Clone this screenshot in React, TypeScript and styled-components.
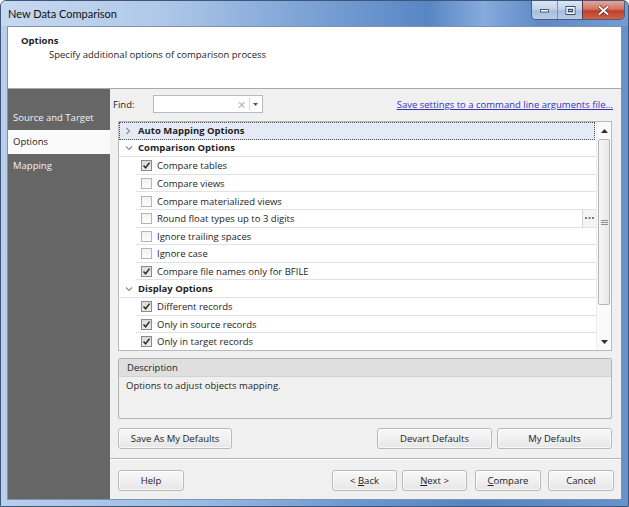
import React from 'react';
import styled, { createGlobalStyle } from 'styled-components';

const Global = createGlobalStyle`
  html, body { margin: 0; padding: 0; background: #ffffff; overflow: hidden; }
  body {
    font-family: "Open Sans", "Noto Sans", sans-serif;
    font-size: 9.5px;
    color: #1e1e1e;
  }
  * { box-sizing: border-box; }
`;

const Window = styled.div`
  width: 629px;
  height: 507px;
  display: flex;
  flex-direction: column;
  border: 1px solid #3d5679;
  border-radius: 6px 6px 0 0;
  padding: 0 6px 6px 6px;
  background: linear-gradient(to right, #b9cfea 0%, #9ebde3 30%, #6f99d1 55%, #5583c3 75%, #6892cc 100%);
`;

const TitleBar = styled.div`
  height: 25px;
  display: flex;
  justify-content: space-between;
  align-items: flex-start;
  margin: 0 -6px;
  padding: 0 3px 0 7px;
  border-radius: 5px 5px 0 0;
  background: linear-gradient(to right, #c7d9ef 0%, #b0c9e9 25%, #7ea4d6 48%, #5886c4 68%, #86abdc 77%, #5d8ac7 86%, #729cd2 100%);
`;

const TitleText = styled.div`
  font-family: Lato, "Open Sans", sans-serif;
  font-size: 11px;
  line-height: 25px;
  color: #111;
`;

const CaptionGroup = styled.div`
  display: flex;
  height: 19px;
  border: 1px solid #4b5f7d;
  border-top: none;
  border-radius: 0 0 5px 5px;
  overflow: hidden;
`;

const CaptionButton = styled.div<{ $w: number; $close?: boolean }>`
  width: ${p => p.$w}px;
  height: 100%;
  display: flex;
  align-items: center;
  justify-content: center;
  border-left: ${p => (p.$close ? '1px solid #5a3a3a' : '1px solid #7d92b3')};
  &:first-child { border-left: none; }
  background: ${p =>
    p.$close
      ? 'linear-gradient(to bottom, #e3a598 0%, #d27563 45%, #c13f2c 55%, #d2604a 100%)'
      : 'linear-gradient(to bottom, #dbe6f4 0%, #c2d3ea 45%, #a5bddf 55%, #b9cde9 100%)'};
`;

const Client = styled.div`
  flex: 1;
  display: flex;
  flex-direction: column;
  border: 1px solid #7e93b2;
  background: #f0f0f0;
  min-height: 0;
`;

const Header = styled.div`
  height: 62px;
  background: #ffffff;
  border-bottom: 1px solid #a9a9a9;
  padding: 7px 0 0 13px;
`;

const HeaderTitle = styled.div`
  font-weight: 700;
  line-height: 13px;
`;

const HeaderSub = styled.div`
  line-height: 13px;
  margin-top: 1px;
  padding-left: 28px;
`;

const Main = styled.div`
  flex: 1;
  display: flex;
  min-height: 0;
`;

const Sidebar = styled.div`
  width: 102px;
  background: #666666;
  padding-top: 17px;
  display: flex;
  flex-direction: column;
`;

const NavItem = styled.div<{ $active?: boolean }>`
  height: 24px;
  line-height: 24px;
  padding-left: 5px;
  color: ${p => (p.$active ? '#222' : '#f2f2f2')};
  background: ${p => (p.$active ? '#fafafa' : 'transparent')};
`;

const Content = styled.div`
  flex: 1;
  display: flex;
  flex-direction: column;
  padding: 6px 9px 0 8px;
  min-width: 0;
`;

const FindRow = styled.div`
  height: 18px;
  display: flex;
  align-items: center;
`;

const FindLabel = styled.span`
  margin-left: -5px;
  width: 40px;
`;

const FindBox = styled.div`
  width: 110px;
  height: 18px;
  border: 1px solid #b5b9c2;
  background: #fff;
  display: flex;
  align-items: center;
  justify-content: flex-end;
`;

const ClearGlyph = styled.span`
  color: #b8b8b8;
  font-size: 11px;
  width: 12px;
  text-align: center;
  margin-right: 2px;
`;

const DropPart = styled.span`
  width: 12px;
  height: 12px;
  border-left: 1px solid #d8d8d8;
  display: flex;
  align-items: center;
  justify-content: center;
  margin-right: 1px;
`;

const Link = styled.a`
  margin-left: auto;
  margin-right: -1px;
  color: #3434bb;
  text-decoration: underline;
  cursor: pointer;
`;

const Grid = styled.div`
  margin-top: 8px;
  height: 230px;
  border: 1px solid #b9b9b9;
  background: #fff;
  display: flex;
  overflow: hidden;
`;

const List = styled.div`
  flex: 1;
  display: flex;
  flex-direction: column;
  min-width: 0;
`;

const CategoryRow = styled.div<{ $focus?: boolean }>`
  height: 17.6px;
  flex: none;
  display: flex;
  align-items: center;
  padding-left: 6px;
  font-weight: 700;
  border-bottom: 1px solid #e2e2e2;
  ${p =>
    p.$focus
      ? `background: #e4ebf6; border: 1px dotted #4a4a4a; margin-right: 1px; padding-left: 5px;`
      : ''}
`;

const Chevron = styled.span`
  width: 13px;
  display: flex;
  align-items: center;
`;

const ItemRow = styled.div`
  height: 17.6px;
  flex: none;
  margin-left: 17px;
  display: flex;
  align-items: center;
  padding-left: 5px;
  border-bottom: 1px solid #e2e2e2;
  border-top: 1px solid transparent;
`;

const Box = styled.span<{ $checked?: boolean }>`
  width: 11px;
  height: 11px;
  flex: none;
  border: 1px solid ${p => (p.$checked ? '#8a8a8a' : '#b4b4b4')};
  background: ${p =>
    p.$checked ? 'linear-gradient(#dcdcdc, #ececec)' : 'linear-gradient(#f2f2f2, #fcfcfc)'};
  display: flex;
  align-items: center;
  justify-content: center;
  margin-right: 5px;
`;

const EllipsisButton = styled.span`
  margin-left: auto;
  width: 14px;
  height: 17px;
  border-left: 1px solid #d4d4d4;
  background: #f4f4f4;
  display: flex;
  align-items: center;
  justify-content: center;
`;

const ScrollBar = styled.div`
  width: 15px;
  flex: none;
  background: #fafafa;
  border-left: 1px solid #ededed;
  display: flex;
  flex-direction: column;
  align-items: center;
`;

const ArrowCell = styled.div`
  height: 17px;
  width: 100%;
  display: flex;
  align-items: center;
  justify-content: center;
`;

const Thumb = styled.div`
  width: 12px;
  height: 166px;
  border: 1px solid #b6b6b6;
  border-radius: 2px;
  background: linear-gradient(to right, #f6f6f6, #e9e9e9);
  display: flex;
  align-items: center;
  justify-content: center;
`;

const Spacer = styled.div`
  flex: 1;
`;

const Description = styled.div`
  margin-top: 7px;
  height: 61px;
  border: 1px solid #b3b3b3;
  border-radius: 2px;
  display: flex;
  flex-direction: column;
  overflow: hidden;
`;

const DescHeader = styled.div`
  height: 18px;
  line-height: 18px;
  background: #dfdfdf;
  border-bottom: 1px solid #d2d2d2;
  padding-left: 8px;
`;

const DescBody = styled.div`
  padding: 1px 0 0 7px;
  line-height: 16px;
`;

const ButtonRow = styled.div<{ $tight?: boolean }>`
  margin-top: ${p => (p.$tight ? '11px' : '9px')};
  margin-right: ${p => (p.$tight ? '-2px' : '0')};
  height: 21px;
  display: flex;
  align-items: center;
`;

const Button = styled.button<{ $w: number; $gap?: number }>`
  width: ${p => p.$w}px;
  height: 21px;
  margin-left: ${p => p.$gap ?? 0}px;
  padding: 0;
  font-family: inherit;
  font-size: 9.5px;
  color: #222;
  border: 1px solid #b9b9b9;
  border-radius: 3px;
  background: linear-gradient(to bottom, #f8f8f8 0%, #f0f0f0 50%, #e6e6e6 100%);
  box-shadow: inset 0 0 0 1px rgba(255, 255, 255, 0.7);
`;

const PushRight = styled.div`
  margin-left: auto;
  display: flex;
`;

const Separator = styled.div`
  margin: 9px -9px 0 -8px;
  height: 1px;
  background: #b4b4b4;
  box-shadow: 0 1px 0 #ffffff;
`;

const U = styled.span`
  text-decoration: underline;
`;

const Check = () => (
  <svg width="9" height="9" viewBox="0 0 9 9">
    <path d="M1.5 4.5 L3.6 6.8 L7.6 1.6" fill="none" stroke="#2b2b2b" strokeWidth="1.5" />
  </svg>
);

const ChevronRight = () => (
  <svg width="6" height="8" viewBox="0 0 6 8">
    <path d="M1.5 1 L4.5 4 L1.5 7" fill="none" stroke="#8a8a8a" strokeWidth="1.1" />
  </svg>
);

const ChevronDown = () => (
  <svg width="8" height="6" viewBox="0 0 8 6">
    <path d="M1 1.5 L4 4.5 L7 1.5" fill="none" stroke="#8a8a8a" strokeWidth="1.1" />
  </svg>
);

const Item = ({ checked, label, extra }: { checked?: boolean; label: string; extra?: boolean }) => (
  <ItemRow>
    <Box $checked={checked}>{checked && <Check />}</Box>
    <span>{label}</span>
    {extra && (
      <EllipsisButton>
        <svg width="9" height="3" viewBox="0 0 9 3">
          <path d="M0 1 H2 M3.5 1 H5.5 M7 1 H9" stroke="#555" strokeWidth="1.4" />
        </svg>
      </EllipsisButton>
    )}
  </ItemRow>
);

export default function App() {
  return (
    <>
      <Global />
      <Window>
        <TitleBar>
          <TitleText>New Data Comparison</TitleText>
          <CaptionGroup>
            <CaptionButton $w={25}>
              <svg width="11" height="5" viewBox="0 0 11 5">
                <rect x="1.5" y="1.5" width="8" height="2.5" fill="#ffffff" stroke="#4b5b75" strokeWidth="1" />
              </svg>
            </CaptionButton>
            <CaptionButton $w={25}>
              <svg width="11" height="9" viewBox="0 0 11 9">
                <rect x="1" y="0.5" width="9" height="8" fill="none" stroke="#3d4c66" strokeWidth="1" />
                <rect x="2" y="1.5" width="7" height="6" fill="none" stroke="#ffffff" strokeWidth="1" />
                <rect x="3.5" y="3.5" width="4" height="2" fill="none" stroke="#3d4c66" strokeWidth="1" />
              </svg>
            </CaptionButton>
            <CaptionButton $w={42} $close>
              <svg width="13" height="11" viewBox="0 0 13 11">
                <path d="M2 1.5 L11 9.5 M11 1.5 L2 9.5" stroke="#5a2a22" strokeWidth="3.4" />
                <path d="M2 1.5 L11 9.5 M11 1.5 L2 9.5" stroke="#ffffff" strokeWidth="1.8" />
              </svg>
            </CaptionButton>
          </CaptionGroup>
        </TitleBar>
        <Client>
          <Header>
            <HeaderTitle>Options</HeaderTitle>
            <HeaderSub>Specify additional options of comparison process</HeaderSub>
          </Header>
          <Main>
            <Sidebar>
              <NavItem>Source and Target</NavItem>
              <NavItem $active>Options</NavItem>
              <NavItem>Mapping</NavItem>
            </Sidebar>
            <Content>
              <FindRow>
                <FindLabel>Find:</FindLabel>
                <FindBox>
                  <ClearGlyph>✕</ClearGlyph>
                  <DropPart>
                    <svg width="5" height="3" viewBox="0 0 5 3">
                      <path d="M0 0 L5 0 L2.5 3 Z" fill="#555" />
                    </svg>
                  </DropPart>
                </FindBox>
                <Link>Save settings to a command line arguments file...</Link>
              </FindRow>
              <Grid>
                <List>
                  <CategoryRow $focus>
                    <Chevron>
                      <ChevronRight />
                    </Chevron>
                    Auto Mapping Options
                  </CategoryRow>
                  <CategoryRow>
                    <Chevron>
                      <ChevronDown />
                    </Chevron>
                    Comparison Options
                  </CategoryRow>
                  <Item checked label="Compare tables" />
                  <Item label="Compare views" />
                  <Item label="Compare materialized views" />
                  <Item label="Round float types up to 3 digits" extra />
                  <Item label="Ignore trailing spaces" />
                  <Item label="Ignore case" />
                  <Item checked label="Compare file names only for BFILE" />
                  <CategoryRow>
                    <Chevron>
                      <ChevronDown />
                    </Chevron>
                    Display Options
                  </CategoryRow>
                  <Item checked label="Different records" />
                  <Item checked label="Only in source records" />
                  <Item checked label="Only in target records" />
                </List>
                <ScrollBar>
                  <ArrowCell>
                    <svg width="7" height="4" viewBox="0 0 7 4">
                      <path d="M0 4 L3.5 0 L7 4 Z" fill="#2e2e2e" />
                    </svg>
                  </ArrowCell>
                  <Thumb>
                    <svg width="7" height="5" viewBox="0 0 7 5">
                      <path d="M0 0.5 H7 M0 2.5 H7 M0 4.5 H7" stroke="#8c8c8c" strokeWidth="1" />
                    </svg>
                  </Thumb>
                  <Spacer />
                  <ArrowCell>
                    <svg width="7" height="4" viewBox="0 0 7 4">
                      <path d="M0 0 L7 0 L3.5 4 Z" fill="#2e2e2e" />
                    </svg>
                  </ArrowCell>
                </ScrollBar>
              </Grid>
              <Description>
                <DescHeader>Description</DescHeader>
                <DescBody>Options to adjust objects mapping.</DescBody>
              </Description>
              <ButtonRow>
                <Button $w={114}>Save As My Defaults</Button>
                <PushRight>
                  <Button $w={115}>Devart Defaults</Button>
                  <Button $w={115} $gap={5}>My Defaults</Button>
                </PushRight>
              </ButtonRow>
              <Separator />
              <ButtonRow $tight>
                <Button $w={66}>Help</Button>
                <PushRight>
                  <Button $w={65}>
                    &lt; <U>B</U>ack
                  </Button>
                  <Button $w={65} $gap={5}>
                    <U>N</U>ext &gt;
                  </Button>
                  <Button $w={66} $gap={8}>
                    <U>C</U>ompare
                  </Button>
                  <Button $w={66} $gap={7}>
                    Cancel
                  </Button>
                </PushRight>
              </ButtonRow>
            </Content>
          </Main>
        </Client>
      </Window>
    </>
  );
}
